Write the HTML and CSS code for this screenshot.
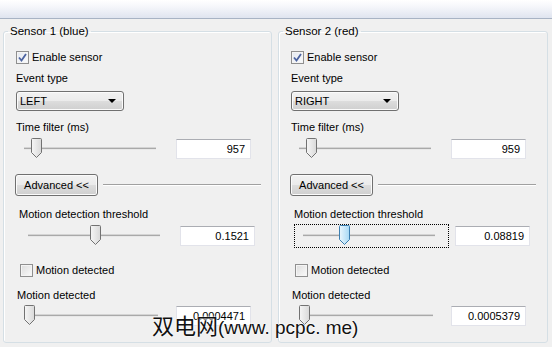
FILE: index.html
```html
<!DOCTYPE html>
<html lang="en">
<head>
  <meta charset="UTF-8">
  <title>Sensor settings</title>
  <link rel="stylesheet" href="styles.css">
</head>
<body>
  <div class="topbar"></div>

  <div class="panels">
    <fieldset class="sensor">
      <legend>Sensor 1 (blue)</legend>
      <div class="check-row first">
        <span class="box checked"><svg width="9" height="9" viewBox="0 0 9 9"><path d="M1 4.5 L3.5 7.5 L8 1" fill="none" stroke="#4c63a0" stroke-width="1.8"/></svg></span>
        <span>Enable sensor</span>
      </div>
      <div class="label event">Event type</div>
      <div class="combo">
        <span>LEFT</span>
        <svg width="8" height="4" viewBox="0 0 8 4"><path d="M0 0 H8 L4 4 Z" fill="#000"/></svg>
      </div>
      <div class="label time">Time filter (ms)</div>
      <div class="slider-row">
        <div class="slider">
          <div class="track"></div>
          <svg class="thumb" style="left: 9px" width="11" height="20" viewBox="0 0 11 20"><path d="M0.5 1.5 Q0.5 0.5 1.5 0.5 H9.5 Q10.5 0.5 10.5 1.5 V14.5 L5.5 19.5 L0.5 14.5 Z" fill="url(#g1)" stroke="#727272"/><defs><linearGradient id="g1" x1="0" x2="1"><stop offset="0" stop-color="#f6f6f6"/><stop offset="1" stop-color="#d9d9d9"/></linearGradient></defs></svg>
        </div>
        <div class="value">957</div>
      </div>
      <div class="adv-row">
        <div class="button">Advanced &lt;&lt;</div>
        <div class="rule"></div>
      </div>

      <div class="advanced">
        <div class="label thresh">Motion detection threshold</div>
        <div class="slider-row">
          <div class="slider">
            <div class="track"></div>
            <svg class="thumb" style="left: 64px" width="11" height="20" viewBox="0 0 11 20"><path d="M0.5 1.5 Q0.5 0.5 1.5 0.5 H9.5 Q10.5 0.5 10.5 1.5 V14.5 L5.5 19.5 L0.5 14.5 Z" fill="url(#g1)" stroke="#727272"/></svg>
          </div>
          <div class="value">0.1521</div>
        </div>
        <div class="check-row detect">
          <span class="box"></span>
          <span>Motion detected</span>
        </div>
      </div>
      <div class="label motion">Motion detected</div>
      <div class="slider-row last">
        <div class="slider">
          <div class="track"></div>
          <svg class="thumb" style="left: 0px" width="11" height="20" viewBox="0 0 11 20"><path d="M0.5 1.5 Q0.5 0.5 1.5 0.5 H9.5 Q10.5 0.5 10.5 1.5 V14.5 L5.5 19.5 L0.5 14.5 Z" fill="url(#g1)" stroke="#727272"/></svg>
        </div>
        <div class="value">0.0004471</div>
      </div>
    </fieldset>

    <fieldset class="sensor">
      <legend>Sensor 2 (red)</legend>
      <div class="check-row first">
        <span class="box checked"><svg width="9" height="9" viewBox="0 0 9 9"><path d="M1 4.5 L3.5 7.5 L8 1" fill="none" stroke="#4c63a0" stroke-width="1.8"/></svg></span>
        <span>Enable sensor</span>
      </div>
      <div class="label event">Event type</div>
      <div class="combo">
        <span>RIGHT</span>
        <svg width="8" height="4" viewBox="0 0 8 4"><path d="M0 0 H8 L4 4 Z" fill="#000"/></svg>
      </div>
      <div class="label time">Time filter (ms)</div>
      <div class="slider-row">
        <div class="slider">
          <div class="track"></div>
          <svg class="thumb" style="left: 9px" width="11" height="20" viewBox="0 0 11 20"><path d="M0.5 1.5 Q0.5 0.5 1.5 0.5 H9.5 Q10.5 0.5 10.5 1.5 V14.5 L5.5 19.5 L0.5 14.5 Z" fill="url(#g1)" stroke="#727272"/></svg>
        </div>
        <div class="value">959</div>
      </div>
      <div class="adv-row">
        <div class="button">Advanced &lt;&lt;</div>
        <div class="rule"></div>
      </div>

      <div class="advanced">
        <div class="label thresh">Motion detection threshold</div>
        <div class="slider-row">
          <div class="slider focused">
            <div class="track"></div>
            <svg class="thumb" style="left: 38px" width="11" height="20" viewBox="0 0 11 20"><path d="M0.5 1.5 Q0.5 0.5 1.5 0.5 H9.5 Q10.5 0.5 10.5 1.5 V14.5 L5.5 19.5 L0.5 14.5 Z" fill="url(#g2)" stroke="#3c7fb1"/><defs><linearGradient id="g2" x1="0" x2="1"><stop offset="0" stop-color="#eaf6fd"/><stop offset="1" stop-color="#a7d9f5"/></linearGradient></defs></svg>
          </div>
          <div class="value">0.08819</div>
        </div>
        <div class="check-row detect">
          <span class="box"></span>
          <span>Motion detected</span>
        </div>
      </div>
      <div class="label motion">Motion detected</div>
      <div class="slider-row last">
        <div class="slider">
          <div class="track"></div>
          <svg class="thumb" style="left: 0px" width="11" height="20" viewBox="0 0 11 20"><path d="M0.5 1.5 Q0.5 0.5 1.5 0.5 H9.5 Q10.5 0.5 10.5 1.5 V14.5 L5.5 19.5 L0.5 14.5 Z" fill="url(#g1)" stroke="#727272"/></svg>
        </div>
        <div class="value">0.0005379</div>
      </div>
    </fieldset>
  </div>

  <div class="watermark">双电网<span class="latin">(www. pcpc. me)</span></div>
</body>
</html>
```

FILE: styles.css
```css
body {
  margin: 0;
  background-color: #f0f0f0;
  font-family: "Liberation Sans", Arial, sans-serif;
  font-size: 11px;
  color: #000;
  position: relative;
  overflow: hidden;
  height: 347px;
}

.topbar {
  height: 18px;
  background: linear-gradient(#ffffff 0%, #f6f7fb 35%, #dfe4ef 100%);
  border-bottom: 1px solid #a8b3c4;
}

.panels {
  display: flex;
  gap: 6px;
  padding: 5px 0 0 3px;
}

.sensor {
  box-sizing: border-box;
  width: 269px;
  height: 319px;
  margin: 0;
  padding: 12px 0 0 0;
  border: 1px solid #d5dfe5;
  border-radius: 3px;
  box-shadow: inset 1px 1px 0 #fff;
  min-width: 0;
}

.sensor + .sensor {
  width: 270px;
}

.sensor legend {
  margin-left: 4px;
  padding: 0 2px;
  line-height: 14px;
  font-size: 11.5px;
}

.check-row {
  display: flex;
  align-items: center;
  gap: 3px;
  height: 14px;
}

.check-row.first {
  margin-left: 12px;
}

.box {
  box-sizing: border-box;
  width: 13px;
  height: 13px;
  border: 1px solid #8f8f8f;
  background: linear-gradient(135deg, #dcdcdc, #fbfbfb);
  box-shadow: inset 0 0 0 1px #f4f4f4;
  display: flex;
  align-items: center;
  justify-content: center;
}

.box.checked {
  background: linear-gradient(135deg, #e4e8f0, #fafbfc);
}

.label {
  line-height: 14px;
  height: 14px;
}

.label.event {
  margin: 7px 0 0 12px;
}

.combo {
  box-sizing: border-box;
  width: 108px;
  height: 20px;
  margin: 6px 0 0 12px;
  padding: 0 7px 0 3px;
  border: 1px solid #707070;
  border-radius: 3px;
  background: linear-gradient(#f2f2f2 0%, #ebebeb 50%, #dddddd 51%, #cfcfcf 100%);
  box-shadow: inset 0 0 0 1px #fbfbfb;
  display: flex;
  align-items: center;
  justify-content: space-between;
}

.label.time {
  margin: 9px 0 0 12px;
}

.slider-row {
  display: flex;
  align-items: center;
  height: 20px;
  margin-top: 5px;
}

.slider {
  position: relative;
  width: 136px;
  height: 20px;
  margin-left: 18px;
}

.track {
  position: absolute;
  left: 2px;
  right: 2px;
  top: 8px;
  height: 1px;
  background: #a9a9a9;
  border-bottom: 1px solid #e8e8e8;
  border-top: 1px solid #d4d4d4;
}

.thumb {
  position: absolute;
  top: -1px;
}

.value {
  box-sizing: border-box;
  width: 75px;
  height: 20px;
  margin-left: 18px;
  padding-right: 5px;
  border: 1px solid #e2e3ea;
  border-top-color: #abadb3;
  background: #fff;
  text-align: right;
  line-height: 18px;
}

.adv-row {
  display: flex;
  align-items: center;
  margin-top: 15px;
  margin-left: 11px;
}

.button {
  box-sizing: border-box;
  width: 83px;
  height: 22px;
  border: 1px solid #707070;
  border-radius: 3px;
  background: linear-gradient(#f2f2f2 0%, #ebebeb 50%, #dddddd 51%, #cfcfcf 100%);
  box-shadow: inset 0 0 0 1px #fbfbfb;
  text-align: center;
  line-height: 20px;
}

.rule {
  width: 158px;
  height: 0;
  margin-left: 5px;
  border-top: 1px solid #a0a0a0;
  border-bottom: 1px solid #fff;
}

.advanced {
  padding-left: 4px;
}

.label.thresh {
  margin: 11px 0 0 11px;
}

.advanced .slider-row {
  margin-top: 5px;
}

.slider.focused::after {
  content: "";
  position: absolute;
  left: -7px;
  right: -12px;
  top: -2px;
  bottom: -2px;
  border: 1px dotted #000;
}

.check-row.detect {
  margin: 17px 0 0 12px;
}

.label.motion {
  margin: 11px 0 0 13px;
}

.slider-row.last {
  margin-top: 4px;
}

.slider-row.last .slider {
  margin-left: 20px;
}

.slider-row.last .value {
  margin-left: 16px;
}

.watermark {
  position: absolute;
  left: 152px;
  top: 310px;
  font-family: "Noto Sans CJK SC", sans-serif;
  font-size: 22px;
  line-height: 28px;
  color: #111;
  text-shadow: 0 0 2px #fff, 0 0 2px #fff;
}

.watermark .latin {
  font-family: "Liberation Sans", sans-serif;
  font-size: 19px;
}
```
